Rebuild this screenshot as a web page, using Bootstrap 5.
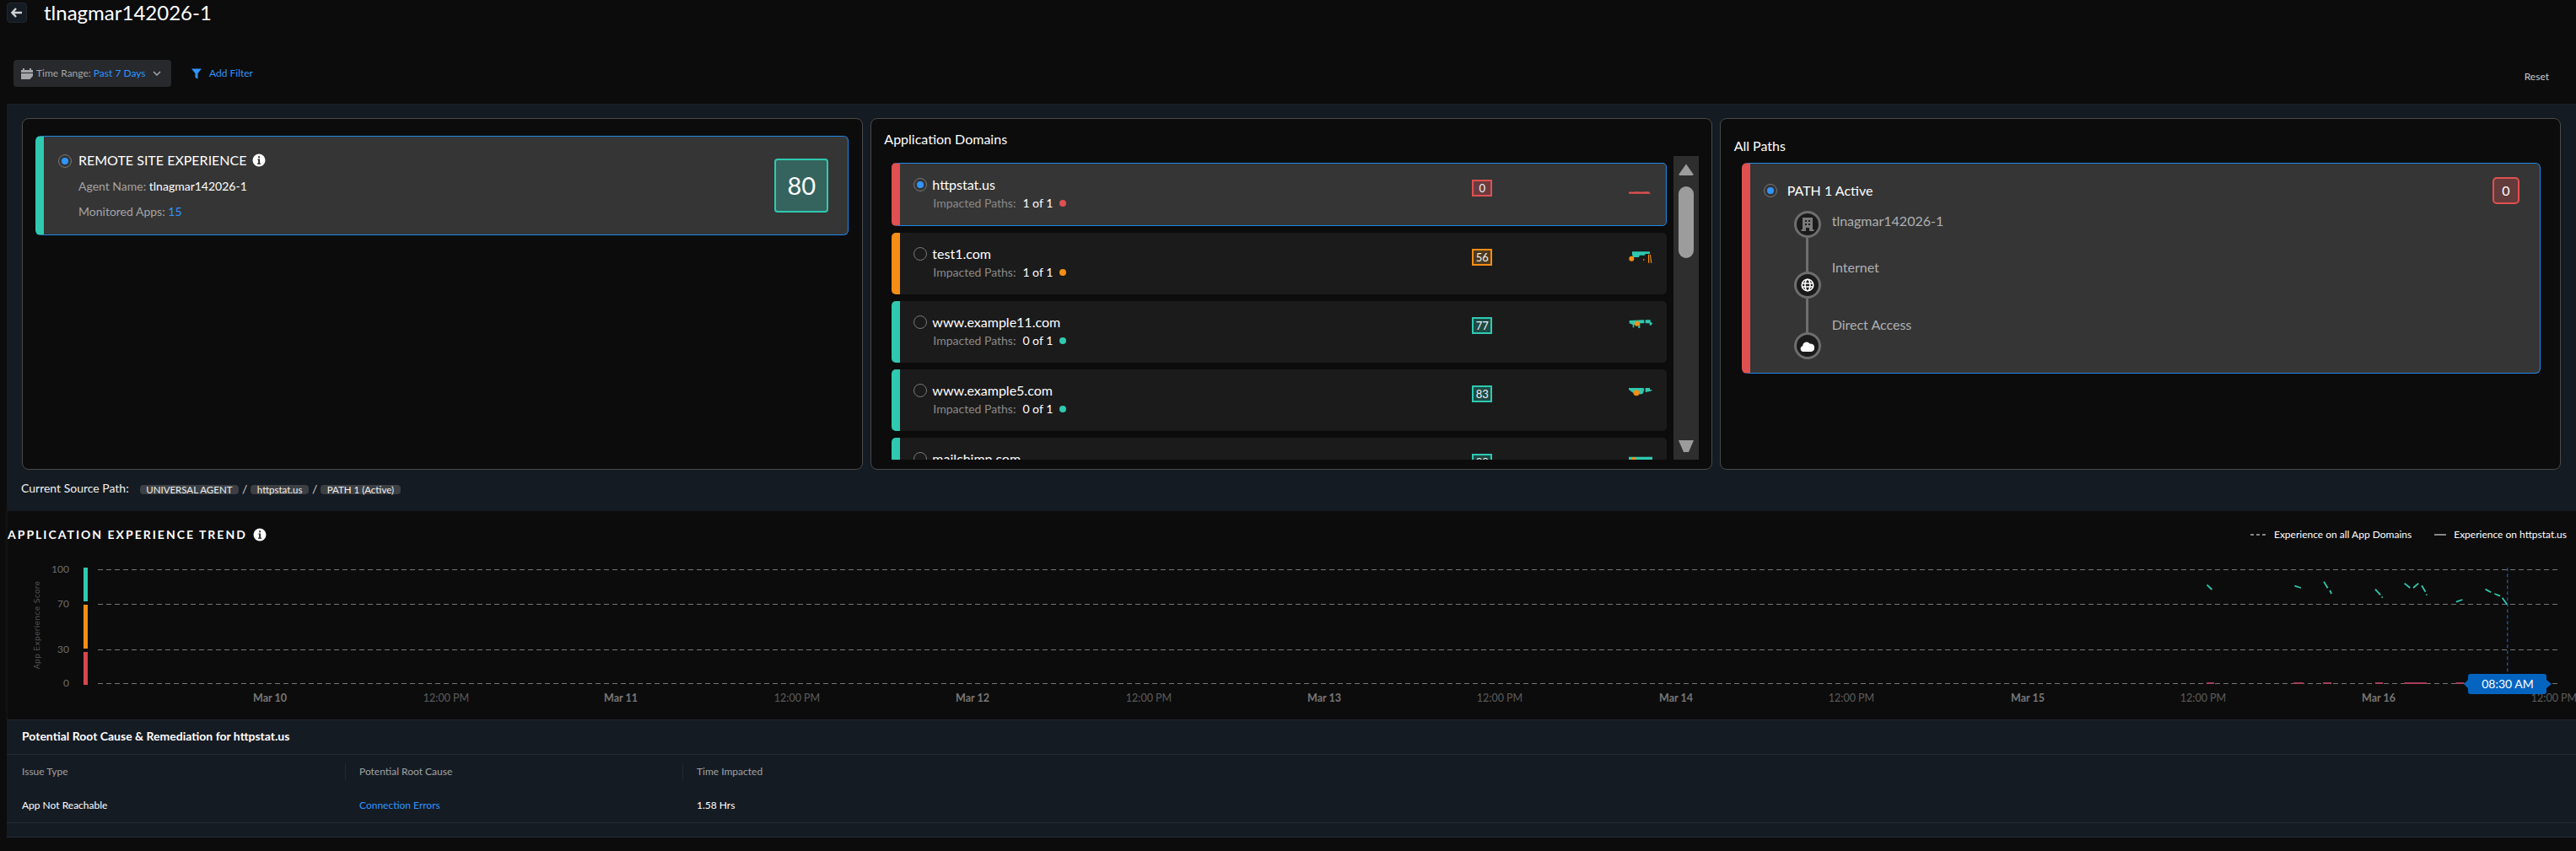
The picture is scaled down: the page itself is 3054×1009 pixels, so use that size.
<!doctype html>
<html lang="en">
<head>
<meta charset="utf-8">
<title>tlnagmar142026-1</title>
<link href="https://cdn.jsdelivr.net/npm/bootstrap@5.3.0/dist/css/bootstrap.min.css" rel="stylesheet">
<style>
html,body{height:1009px;overflow:hidden;background:#0c0c0c;font-family:Lato,"Liberation Sans",sans-serif;color:#fff;}
.top-row{height:30px;padding:3px 0 0 8px;gap:20px;}
.back-btn{width:24px;height:24px;background:#151b23;border:1px solid #23282f;border-radius:4px;padding:0;}
.page-title{font-size:24px;line-height:24px;margin:0;font-weight:400;color:#fff;}
.filter-row{height:93px;padding:41px 32px 0 16px;align-items:flex-start;}
.range-btn{width:187px;height:32px;background:#27292c;border-radius:4px;font-size:12px;color:#a4a6a9;padding:0 8px 0 9px;gap:4px;white-space:nowrap;}
.link-blue{color:#2f95ff;}
.add-filter{font-size:12px;margin-left:23px;height:32px;gap:8px;}
.reset-txt{font-size:12px;color:#c9c9c9;margin-left:auto;height:32px;margin-top:4px;}
.top-panel{margin-left:8px;background:#151b23;height:483px;padding:16px 18px 0 18px;border-top:1px solid #1b2129;}
.three-cols{height:417px;gap:9px;}
.pane{flex:0 0 calc((100% - 18px)/3);border:1px solid #4a4a4a;border-radius:8px;background:#0c0c0c;position:relative;}
.pane-a{padding:20px 16px 0 15px;}
.pane-b{padding:14px 15px 0 24px;}
.pane-c{padding:22px 23px 0 16px;}
.pane-b .pane-head{margin-left:-9px;}
.pane-head{font-size:16px;line-height:20px;color:#fff;}
.exp-card{height:118px;background:#353535;border:1px solid #1f87e6;border-left:10px solid #2fc9b0;border-radius:6px;padding:21px 23px 0 17px;gap:8px;}
.radio-dot{width:16px;height:16px;border:1px solid #777;border-radius:50%;flex:none;display:flex;align-items:center;justify-content:center;}
.radio-dot.on::after{content:"";width:8px;height:8px;border-radius:50%;background:#2f95ff;}
.exp-title{font-size:16px;line-height:16px;gap:6px;margin-top:-1px;}
.meta-line{font-size:14px;line-height:20px;color:#a4a4a4;margin-top:13px;}
.meta-line.tall{margin-top:10px;}
.score-big{width:64px;height:64px;border:2px solid #2fc9b0;border-radius:4px;background:#35635e;font-size:29px;margin-top:5px;flex:none;}
.dom-wrap{height:360px;margin-top:10px;}
.dom-list{flex:1 1 0;overflow:hidden;padding:8px 8px 0 0;}
.dom-item{height:73px;margin-bottom:8px;background:#1b1b1b;border-left:10px solid;border-radius:5px;padding:17px 0 0 16px;position:relative;}
.dom-item.picked{height:75px;background:#353535;border:1px solid #1f87e6;border-left:10px solid #e05050;}
.dom-name{font-size:16px;line-height:16px;color:#fff;margin-left:6px;}
.imp-line{font-size:14px;line-height:18px;color:#8a8a8a;margin:5px 0 0 23px;gap:8px;}
.imp-line b{font-weight:400;color:#fff;}
.state-dot{width:8px;height:8px;border-radius:50%;}
.mini-score{position:absolute;left:678px;top:19px;width:24px;height:20px;border:2px solid;font-size:13px;line-height:16px;text-align:center;color:#f2f2f2;}
.mini-spark{position:absolute;left:864px;top:20px;width:32px;height:18px;}
.c-red{border-color:#e05050;}.c-org{border-color:#f58d16;}.c-teal{border-color:#2fc9b0;}
.bg-red{background:#6a3c3f;}.bg-org{background:#4f3a20;}.bg-teal{background:#1d4a45;}
.dot-red{background:#e05050;}.dot-org{background:#f58d16;}.dot-teal{background:#2fc9b0;}
.scroll-track{width:30px;background:#2e2e2e;flex:none;padding:9px 6px;align-items:center;}
.sb-up,.sb-down{width:18px;height:14px;flex:none;}
.sb-thumb{width:18px;height:85px;background:#9c9c9c;border-radius:9px;margin-top:13px;}
.sb-down{margin-top:auto;}
.path-card{height:250px;margin:10px 0 0 9px;background:#353535;border:1px solid #1f87e6;border-left:10px solid #e05050;border-radius:6px;padding:24px 24px 0 16px;}
.path-row{height:16px;}
.path-title{font-size:16px;line-height:16px;gap:12px;}
.path-score{width:32px;height:32px;background:#633b3b;border:2px solid #e05050;border-radius:5px;font-size:16px;flex:none;}
.tl-body{margin:16px 0 0 36px;gap:13px;}
.tl-nodes{width:32px;}
.tl-node{width:32px;height:32px;border:3px solid #6e6e6e;border-radius:50%;background:#1b1b1b;flex:none;}
.tl-link{width:3px;height:40px;background:#6e6e6e;flex:none;}
.tl-labels{font-size:16px;line-height:24px;color:#aeb0b2;}
.tl-labels div:nth-child(2){margin-top:31px;}
.tl-labels div:nth-child(3){margin-top:44px;}
.src-row{height:48px;padding-top:11px;font-size:14px;line-height:21px;color:#f0f0f0;gap:4px;margin-left:-1px;}
.src-label{margin-right:9px;}
.src-pill{background:#3c3f43;border-radius:4px;font-size:11.5px;line-height:11px;height:11px;padding:0 7.5px;color:#f0f0f0;white-space:nowrap;margin-top:7px;}
.src-sep{font-size:14px;color:#cfcfcf;margin-top:1px;}
.chart-zone{margin-left:8px;height:247px;position:relative;}
.chart-head{position:relative;height:56px;margin-left:-8px;padding:18px 11px 0 9px;z-index:1;}
.trend-title{font-size:14px;line-height:20px;letter-spacing:2px;font-weight:700;gap:7px;}
.legend{margin-left:auto;font-size:12px;gap:9px;line-height:20px;}
.leg-gap{margin-left:18px;}
.chart-svg{position:absolute;left:-8px;top:0;width:3054px;height:247px;}
.chart-svg text{font-family:Lato,"Liberation Sans",sans-serif;}
.chart-svg text.axis-name{font-family:"DejaVu Sans",sans-serif;}
.root-panel{margin-left:8px;height:140px;background:#151b23;border-top:1px solid #1f262e;border-bottom:1px solid #262c34;}
.root-title{height:41px;padding:9px 0 0 18px;font-size:14px;line-height:20px;font-weight:700;border-bottom:1px solid #252b33;}
.root-table{--bs-table-bg:transparent;--bs-table-color:#fff;--bs-table-border-color:transparent;margin:0;table-layout:fixed;width:1300px;font-size:12px;}
.root-table th{font-weight:400;color:#a0a2a5;padding:10px 0 10px 18px;line-height:20px;position:relative;height:40px;border:0;}
.root-table td{padding:10px 0 10px 18px;line-height:20px;height:40px;border:0;vertical-align:middle;}
.root-table th+th::before{content:"";position:absolute;left:1px;top:10px;height:20px;border-left:1px solid #232932;}
.root-sep{border-top:1px solid #252b33;}
.root-table col.col-fixed{width:400px;}
</style>
</head>
<body>
<div class="d-flex align-items-start top-row">
  <button class="back-btn d-flex align-items-center justify-content-center" type="button" aria-label="Back">
    <svg width="14" height="12" viewBox="0 0 14 12"><path d="M6 1 1.500 6 6 11M2 6h11" fill="none" stroke="#cfd2d6" stroke-width="2.400"/></svg>
  </button>
  <h1 class="page-title">tlnagmar142026-1</h1>
</div>
<div class="d-flex filter-row">
  <div class="range-btn d-flex align-items-center">
    <svg width="14" height="14" viewBox="0 0 14 14"><path d="M0 3h2V1h2v2h6V1h2v2h2v3H0zM0 7h14v3l-3.500 4H0z" fill="#a4a6a9"/></svg>
    <span>Time Range: <span class="link-blue">Past 7 Days</span></span>
    <svg width="10" height="7" viewBox="0 0 10 7" class="ms-auto me-1"><path d="M1 1l4 4 4-4" fill="none" stroke="#a4a6a9" stroke-width="1.500"/></svg>
  </div>
  <div class="add-filter link-blue d-flex align-items-center">
    <svg width="14" height="14" viewBox="0 0 14 14"><path d="M1 1.500h12L8.500 7v6.500l-3-1.500V7z" fill="#2f95ff"/></svg>
    <span>Add Filter</span>
  </div>
  <div class="reset-txt d-flex align-items-center">Reset</div>
</div>

<div class="top-panel">
  <div class="d-flex three-cols">
    <div class="pane pane-a">
      <div class="exp-card d-flex">
        <div class="radio-dot on"></div>
        <div class="flex-grow-1">
          <div class="exp-title d-flex align-items-center">REMOTE SITE EXPERIENCE
            <svg width="16" height="16" viewBox="0 0 16 16"><circle cx="8" cy="8" r="7.500" fill="#fff"/><path d="M6.500 6.500H9v5h1.200v1.200H6v-1.200h1.200V7.700H6.500zM7.200 3.300H9v2H7.200z" fill="#222"/></svg>
          </div>
          <div class="meta-line">Agent Name: <span class="text-white">tlnagmar142026-1</span></div>
          <div class="meta-line tall">Monitored Apps: <span class="link-blue">15</span></div>
        </div>
        <div class="score-big d-flex align-items-center justify-content-center">80</div>
      </div>
    </div>

    <div class="pane pane-b">
      <div class="pane-head">Application Domains</div>
      <div class="d-flex dom-wrap">
        <div class="dom-list">
          <div class="dom-item picked">
            <div class="d-flex"><div class="radio-dot on"></div><div class="dom-name">httpstat.us</div></div>
            <div class="imp-line d-flex align-items-center"><span>Impacted Paths:</span><b>1 of 1</b><span class="state-dot dot-red"></span></div>
            <div class="mini-score c-red bg-red">0</div>
            <svg class="mini-spark" viewBox="0 0 32 18"><path d="M0 13.500H7L8 13.300H12L13 13.500H17L18 13.300H22L24 13.600 26 15.800H0z" fill="#e05050"/></svg>
          </div>
          <div class="dom-item c-org">
            <div class="d-flex"><div class="radio-dot"></div><div class="dom-name">test1.com</div></div>
            <div class="imp-line d-flex align-items-center"><span>Impacted Paths:</span><b>1 of 1</b><span class="state-dot dot-org"></span></div>
            <div class="mini-score c-org bg-org">56</div>
            <svg class="mini-spark" viewBox="0 0 32 18"><path d="M4 2.300H25V5H19.700L19 6.700H13L11.700 9H5L4 5.700z" fill="#2fc9b0"/><circle cx="3.300" cy="10.700" r="3" fill="#f58d16"/><path d="M23 5.700H24.200V15.700H23zM25 5.700H26L27.300 15.700H26zM17.300 11H18.300V13H17.300z" fill="#f58d16"/></svg>
          </div>
          <div class="dom-item c-teal">
            <div class="d-flex"><div class="radio-dot"></div><div class="dom-name">www.example11.com</div></div>
            <div class="imp-line d-flex align-items-center"><span>Impacted Paths:</span><b>0 of 1</b><span class="state-dot dot-teal"></span></div>
            <div class="mini-score c-teal bg-teal">77</div>
            <svg class="mini-spark" viewBox="0 0 32 18"><path d="M.7 3 18.300 2.300V6.300H13.300V12H11.300V8H6.300V11.300H4.700V8L.7 6.300zM19.700 2.300H25.700V4.700L28.300 6.300 26.300 8.700H24.700V6.300H19.700z" fill="#2fc9b0"/><circle cx="9.700" cy="6.700" r="3" fill="#f58d16"/></svg>
          </div>
          <div class="dom-item c-teal">
            <div class="d-flex"><div class="radio-dot"></div><div class="dom-name">www.example5.com</div></div>
            <div class="imp-line d-flex align-items-center"><span>Impacted Paths:</span><b>0 of 1</b><span class="state-dot dot-teal"></span></div>
            <div class="mini-score c-teal bg-teal">83</div>
            <svg class="mini-spark" viewBox="0 0 32 18"><path d="M0 2H17.500L18.300 3.700 17 8 15.700 9.300 8 9.500 4 7 0 4zM19.700 2H25V3.700L28.300 4.700 25 6 19.700 7z" fill="#2fc9b0"/><circle cx="9" cy="7.700" r="3.500" fill="#f58d16"/></svg>
          </div>
          <div class="dom-item c-teal">
            <div class="d-flex"><div class="radio-dot"></div><div class="dom-name">mailchimp.com</div></div>
            <div class="mini-score c-teal bg-teal">88</div>
            <svg class="mini-spark" viewBox="0 0 32 18"><path d="M0 2.700H28V9H0z" fill="#2fc9b0"/><circle cx="5.700" cy="6" r="3" fill="#f58d16"/></svg>
          </div>
        </div>
        <div class="scroll-track d-flex flex-column">
          <svg class="sb-up" viewBox="0 0 18 14"><path d="M9 .5 17.500 12.500Q18 14 16 14H2Q0 14 .5 12.500z" fill="#9c9c9c"/></svg>
          <div class="sb-thumb"></div>
          <svg class="sb-down" viewBox="0 0 18 14"><path d="M0 0H18L12 14H6z" fill="#9c9c9c"/></svg>
        </div>
      </div>
    </div>

    <div class="pane pane-c">
      <div class="pane-head">All Paths</div>
      <div class="path-card">
        <div class="d-flex align-items-center path-row">
          <div class="path-title d-flex align-items-center flex-grow-1"><div class="radio-dot on"></div>PATH 1 Active</div>
          <div class="path-score d-flex align-items-center justify-content-center">0</div>
        </div>
        <div class="d-flex tl-body">
          <div class="tl-nodes d-flex flex-column align-items-center">
            <div class="tl-node d-flex align-items-center justify-content-center">
              <svg width="16" height="18" viewBox="0 0 16 18"><path d="M2 1h12v14h1.500v2H10v-4H6v4H.5v-2H2zM5 4v2h2V4zM9 4v2h2V4zM5 8v2h2V8zM9 8v2h2V8z" fill="#7a7a7a" fill-rule="evenodd"/></svg>
            </div>
            <div class="tl-link"></div>
            <div class="tl-node d-flex align-items-center justify-content-center">
              <svg width="16" height="16" viewBox="0 0 16 16"><g fill="none" stroke="#fff" stroke-width="1.600"><circle cx="8" cy="8" r="6.800"/><ellipse cx="8" cy="8" rx="3" ry="6.800"/><path d="M1 6h14M1 10h14"/></g></svg>
            </div>
            <div class="tl-link"></div>
            <div class="tl-node d-flex align-items-center justify-content-center">
              <svg width="17" height="13" viewBox="0 0 17 13"><path d="M4 13a3.500 3.500 0 0 1-.7-6.900A4.500 4.500 0 0 1 11.500 3.500 4.500 4.500 0 0 1 13.500 13z" fill="#fff"/></svg>
            </div>
          </div>
          <div class="tl-labels">
            <div>tlnagmar142026-1</div>
            <div>Internet</div>
            <div>Direct Access</div>
          </div>
        </div>
      </div>
    </div>
  </div>
  <div class="d-flex align-items-start src-row">
    <span class="src-label">Current Source Path:</span>
    <span class="src-pill">UNIVERSAL AGENT</span><span class="src-sep">/</span>
    <span class="src-pill">httpstat.us</span><span class="src-sep">/</span>
    <span class="src-pill">PATH 1 (Active)</span>
  </div>
</div>

<div class="chart-zone">
  <svg class="chart-svg" viewBox="0 606 3054 247">
    <path d="M8 606V853" stroke="#1a1a1a"/>
    <g stroke="#777" stroke-dasharray="6 4" fill="none">
      <path d="M116 675.500H3034M116 716.500H3034M116 770.500H3034M116 810.500H3034"/>
    </g>
    <rect x="99" y="673" width="5" height="40" fill="#2fc9b0"/>
    <rect x="99" y="717" width="5" height="52" fill="#f58d16"/>
    <rect x="99" y="773" width="5" height="39" fill="#d8474c"/>
    <g fill="#6d6d6d" font-size="12" text-anchor="end">
      <text x="82" y="679">100</text><text x="82" y="720">70</text><text x="82" y="774">30</text><text x="82" y="814">0</text>
    </g>
    <text class="axis-name" transform="translate(47 741) rotate(-90)" text-anchor="middle" font-size="9" fill="#555" letter-spacing=".3">App Experience Score</text>
    <g font-size="12.500" text-anchor="middle">
      <g fill="#777" font-weight="700">
        <text x="320" y="832">Mar 10</text><text x="736" y="832">Mar 11</text><text x="1153" y="832">Mar 12</text><text x="1570" y="832">Mar 13</text><text x="1987" y="832">Mar 14</text><text x="2404" y="832">Mar 15</text><text x="2820" y="832">Mar 16</text>
      </g>
      <g fill="#5c5c5c">
        <text x="529" y="832">12:00 PM</text><text x="945" y="832">12:00 PM</text><text x="1362" y="832">12:00 PM</text><text x="1778" y="832">12:00 PM</text><text x="2195" y="832">12:00 PM</text><text x="2612" y="832">12:00 PM</text><text x="3028" y="832">12:00 PM</text>
      </g>
    </g>
    <g transform="translate(2400 610) scale(.4172 .3333)" fill="none">
      <path vector-effect="non-scaling-stroke" stroke="#2fc9b0" stroke-width="1.800" d="M519 250 533 267M768 254 786 261M851 239 862 262M868 270 873 282M997 266 1012 286M1015 293 1018 296M1080 245 1096 261M1105 261 1120 245M1129 253 1140 275M1142 284 1144 287M1227 311 1245 303M1310 266 1326 277M1336 282 1352 290M1358 296 1372 320"/>
      <path vector-effect="non-scaling-stroke" stroke="#a83d5a" stroke-width="2" d="M518 600H539M765 600H793M849 600H873M997 600H1019M1080 600H1143M1226 600H1250"/>
      <path vector-effect="non-scaling-stroke" stroke="#1f78d1" stroke-width="1" stroke-dasharray="4 3" d="M1373 190V560"/>
    </g>
    <path d="M2921 811 2926 806V802Q2926 799 2929 799H3016Q3019 799 3019 802V806L3025 811 3019 816V820Q3019 823 3016 823H2929Q2926 823 2926 820V816z" fill="#0564c0"/>
    <text x="2973" y="816" text-anchor="middle" font-size="14" fill="#fff">08:30 AM</text>
  </svg>
  <div class="chart-head d-flex align-items-start">
    <div class="trend-title d-flex align-items-center">APPLICATION EXPERIENCE TREND
      <svg width="16" height="16" viewBox="0 0 16 16"><circle cx="8" cy="8" r="7.500" fill="#fff"/><path d="M6.500 6.500H9v5h1.200v1.200H6v-1.200h1.200V7.700H6.500zM7.200 3.300H9v2H7.200z" fill="#222"/></svg>
    </div>
    <div class="legend d-flex align-items-center">
      <svg width="19" height="2" viewBox="0 0 19 2"><path d="M0 1H19" stroke="#fff" stroke-dasharray="4 3"/></svg><span>Experience on all App Domains</span>
      <svg class="leg-gap" width="14" height="2" viewBox="0 0 14 2"><path d="M0 1H14" stroke="#fff"/></svg><span>Experience on httpstat.us</span>
    </div>
  </div>
</div>

<div class="root-panel">
  <div class="root-title">Potential Root Cause &amp; Remediation for httpstat.us</div>
  <table class="table root-table">
    <colgroup><col class="col-fixed"><col class="col-fixed"><col></colgroup>
    <thead><tr><th>Issue Type</th><th>Potential Root Cause</th><th>Time Impacted</th></tr></thead>
    <tbody><tr><td>App Not Reachable</td><td class="link-blue">Connection Errors</td><td>1.58 Hrs</td></tr></tbody>
  </table>
  <div class="root-sep"></div>
</div>
<script src="https://cdn.jsdelivr.net/npm/bootstrap@5.3.0/dist/js/bootstrap.bundle.min.js"></script>
</body>
</html>
